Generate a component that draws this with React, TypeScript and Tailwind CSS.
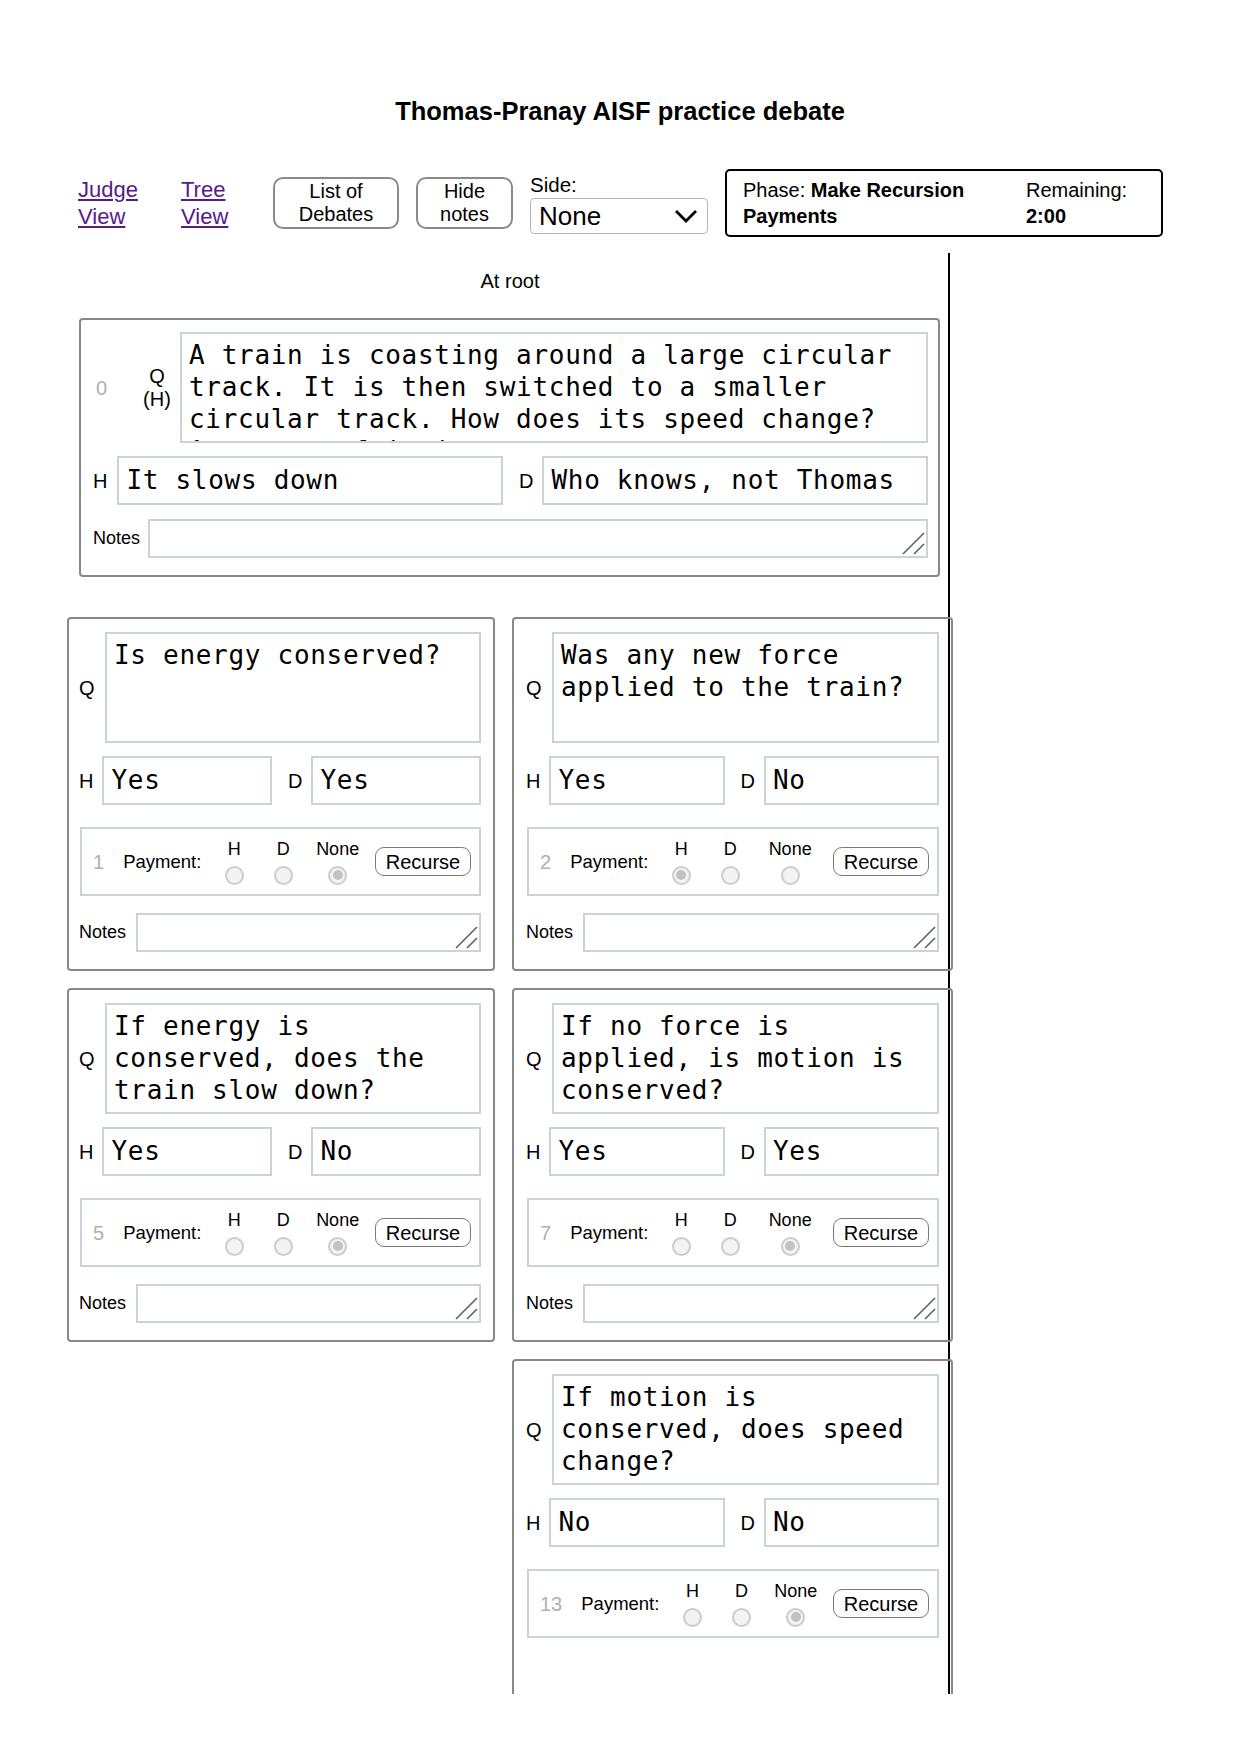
import React from "react";

type Pay = "H" | "D" | "None";

type Child = {
  n: number;
  q: string;
  h: string;
  d: string;
  pay: Pay;
  hideNotes?: boolean;
};

const sans = "font-['Liberation_Sans',Arial,Helvetica,sans-serif]";
const mono = "font-['DejaVu_Sans_Mono','Liberation_Mono',monospace] text-[26px] tracking-[0.7px] text-black";

const children: (Child | null)[] = [
  { n: 1, q: "Is energy conserved?", h: "Yes", d: "Yes", pay: "None" },
  { n: 2, q: "Was any new force applied to the train?", h: "Yes", d: "No", pay: "H" },
  { n: 5, q: "If energy is conserved, does the train slow down?", h: "Yes", d: "No", pay: "None" },
  { n: 7, q: "If no force is applied, is motion is conserved?", h: "Yes", d: "Yes", pay: "None" },
  null,
  { n: 13, q: "If motion is conserved, does speed change?", h: "No", d: "No", pay: "None", hideNotes: true },
];

function ResizeHandle() {
  return (
    <svg className="absolute bottom-0 right-0" width="24" height="24" viewBox="0 0 24 24">
      <line x1="22" y1="1" x2="1" y2="22" stroke="#666" strokeWidth="1.7" />
      <line x1="22" y1="12" x2="12" y2="22" stroke="#666" strokeWidth="1.7" />
    </svg>
  );
}

function NotesBox() {
  return <div className="relative h-[39px] flex-1 border-2 border-[#c9d5d5]"><ResizeHandle /></div>;
}

function Radio({ checked }: { checked: boolean }) {
  return (
    <div className="mt-[7px] flex h-[19px] w-[19px] items-center justify-center rounded-full border-2 border-[#cdcdcd] bg-[#f3f3f3]">
      {checked && <div className="h-[10px] w-[10px] rounded-full bg-[#c2c2c2]" />}
    </div>
  );
}

function PaymentRow({ n, pay }: { n: number; pay: Pay }) {
  return (
    <div className="flex h-[69px] items-center border-2 border-[#c9d5d5] pl-[11px] pr-[8px]">
      <span className="mr-[19px] text-[20px] text-[#b0b0b0]">{n}</span>
      <span className="text-[18.5px]">Payment:</span>
      <div className="ml-[21px] flex w-[24px] flex-col items-center">
        <span className="text-[18px] leading-[20px]">H</span>
        <Radio checked={pay === "H"} />
      </div>
      <div className="ml-[25px] flex w-[24px] flex-col items-center">
        <span className="text-[18px] leading-[20px]">D</span>
        <Radio checked={pay === "D"} />
      </div>
      <div className="ml-[16px] flex flex-1 flex-col items-center">
        <span className="text-[18px] leading-[20px]">None</span>
        <Radio checked={pay === "None"} />
      </div>
      <button className="ml-[11px] h-[29px] w-[96px] rounded-[9px] border-[1.5px] border-[#7a7a7a] bg-white text-[20px] leading-none">
        Recurse
      </button>
    </div>
  );
}

function ChildCard({ c, right }: { c: Child; right: boolean }) {
  return (
    <div
      className={
        "rounded-[4px] border-2 border-[#888] pr-[12px] pt-[13px] pb-[17px] " +
        (right ? "pl-[12px]" : "pl-[10px]")
      }
    >
      <div className="flex items-center">
        <span className="w-[16px] text-[20px]">Q</span>
        <div className={"ml-[10px] h-[111px] flex-1 overflow-hidden border-2 border-[#c9d5d5] pl-[7px] pr-[7px] pt-[5px] leading-[32px] " + mono}>
          {c.q}
        </div>
      </div>
      <div className="mt-[13px] flex items-center">
        <span className="text-[20px]">H</span>
        <div className={"ml-[9px] flex h-[49px] flex-1 items-center border-2 border-[#c9d5d5] pl-[7px] " + mono}>{c.h}</div>
        <span className="ml-[16px] text-[20px]">D</span>
        <div className={"ml-[9px] flex h-[49px] flex-1 items-center border-2 border-[#c9d5d5] pl-[7px] " + mono}>{c.d}</div>
      </div>
      <div className="mt-[22px] ml-[1px]">
        <PaymentRow n={c.n} pay={c.pay} />
      </div>
      <div className={"mt-[17px] flex items-center " + (c.hideNotes ? "invisible" : "")}>
        <span className="mr-[10px] text-[18px]">Notes</span>
        <NotesBox />
      </div>
    </div>
  );
}

export default function App() {
  return (
    <div className={"min-h-[1754px] w-[1240px] bg-white text-black " + sans}>
      <h1 className="pt-[97px] text-center text-[25.5px] font-bold leading-[28px]">
        Thomas-Pranay AISF practice debate
      </h1>

      <div className="mt-[44px] flex items-center gap-[17px] pl-[78px]">
        <div className="w-[86px] pt-[2px]">
          <a href="#" className="text-[22px] leading-[25px] text-[#551a8b] underline">
            Judge View
          </a>
        </div>
        <div className="w-[75px] pt-[2px]">
          <a href="#" className="text-[22px] leading-[25px] text-[#551a8b] underline">
            Tree View
          </a>
        </div>
        <button className="h-[52px] w-[126px] rounded-[10px] border-2 border-[#8a8a8a] bg-white text-[20px] leading-[23px]">
          List of
          <br />
          Debates
        </button>
        <button className="h-[52px] w-[97px] rounded-[10px] border-2 border-[#8a8a8a] bg-white text-[20px] leading-[23px]">
          Hide
          <br />
          notes
        </button>
        <div className="flex flex-col">
          <span className="text-[20.5px] leading-[23px]">Side:</span>
          <div className="mt-[2px] flex h-[36px] w-[178px] items-center justify-between rounded-[4px] border border-[#b5b5b5] pl-[8px] pr-[9px]">
            <span className="text-[26px] leading-none">None</span>
            <svg width="24" height="14" viewBox="0 0 24 14">
              <polyline points="2,2 12,12 22,2" fill="none" stroke="#000" strokeWidth="2.8" />
            </svg>
          </div>
        </div>
        <div className="flex h-[68px] w-[438px] rounded-[5px] border-2 border-black pl-[16px] pt-[6px] text-[20px] leading-[26px]">
          <div className="w-[283px]">
            Phase: <b>Make Recursion</b>
            <br />
            <b>Payments</b>
          </div>
          <div>
            Remaining:
            <br />
            <b>2:00</b>
          </div>
        </div>
      </div>

      <div className="mt-[16px] flex">
        <div className="h-[1441px] w-[950px] overflow-x-visible overflow-y-clip border-r-2 border-black pl-[67px]">
          <div className="w-[886px]">
            <div className="pt-[17px] text-center text-[20px] leading-[23px]">At root</div>

            <div className="mt-[25px] ml-[12px] w-[861px] rounded-[4px] border-2 border-[#888] pl-[12px] pr-[10px] pt-[12px] pb-[17px]">
              <div className="flex items-center">
                <span className="w-[50px] pl-[3px] text-[20px] text-[#b0b0b0]">0</span>
                <span className="w-[28px] text-center text-[20px] leading-[23px]">
                  Q
                  <br />
                  (H)
                </span>
                <div className={"ml-[9px] h-[111px] flex-1 overflow-hidden border-2 border-[#c9d5d5] pl-[7px] pr-[7px] pt-[5px] leading-[32px] " + mono}>
                  A train is coasting around a large circular track. It is then switched to a smaller circular track. How does its speed change? Assume no friction.
                </div>
              </div>
              <div className="mt-[13px] flex items-center">
                <span className="text-[20px]">H</span>
                <div className={"ml-[10px] flex h-[49px] flex-1 items-center border-2 border-[#c9d5d5] pl-[7px] " + mono}>It slows down</div>
                <span className="ml-[16px] text-[20px]">D</span>
                <div className={"ml-[9px] flex h-[49px] flex-1 items-center border-2 border-[#c9d5d5] pl-[7px] " + mono}>Who knows, not Thomas</div>
              </div>
              <div className="mt-[14px] flex items-center">
                <span className="mr-[8px] text-[18px]">Notes</span>
                <NotesBox />
              </div>
            </div>

            <div className="mt-[40px] grid grid-cols-[428px_441px] gap-x-[17px] gap-y-[17px]">
              {children.map((c, i) =>
                c ? <ChildCard key={i} c={c} right={i % 2 === 1} /> : <div key={i} />
              )}
            </div>
          </div>
        </div>
        <div className="flex-1" />
      </div>
    </div>
  );
}
